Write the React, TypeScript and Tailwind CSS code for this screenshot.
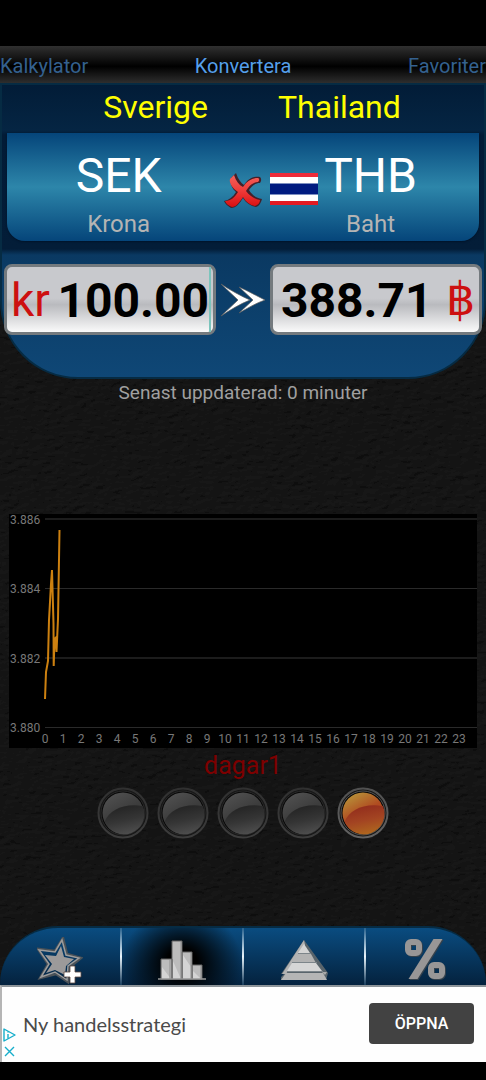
import React, { useState } from "react";

const hours = Array.from({ length: 24 }, (_, i) => i);
const rates = [
  { label: "3.886", y: 5 },
  { label: "3.884", y: 74 },
  { label: "3.882", y: 144 },
  { label: "3.880", y: 213 },
];

function Leather() {
  return (
    <svg className="absolute inset-0 h-full w-full" aria-hidden="true">
      <filter id="leather" x="0" y="0" width="100%" height="100%">
        <feTurbulence type="fractalNoise" baseFrequency="0.1 0.2" numOctaves="2" seed="4" result="noise" />
        <feDiffuseLighting in="noise" lightingColor="#1c1c1c" surfaceScale="2" diffuseConstant="1">
          <feDistantLight azimuth="235" elevation="50" />
        </feDiffuseLighting>
      </filter>
      <rect width="100%" height="100%" fill="#111" />
      <rect width="100%" height="100%" filter="url(#leather)" opacity="0.6" />
    </svg>
  );
}

function CrossIcon() {
  return (
    <svg className="shrink-0" width="38" height="36" viewBox="0 0 38 36" aria-hidden="true">
      <defs>
        <linearGradient id="cross" x1="0" y1="0" x2="0" y2="1">
          <stop offset="0" stopColor="#f4625c" />
          <stop offset="0.5" stopColor="#ee3a38" />
          <stop offset="1" stopColor="#d80f12" />
        </linearGradient>
      </defs>
      <path
        d="M12 0C14 6 17 10 20 12C24 6 29 3 36 4C38 6 37 9 36 10C31 10 28 13 25 17C28 22 32 25 38 26C37 30 35 33 32 34C27 33 22 30 19 25C16 30 12 35 7 35C4 33 1 31 0 28C5 27 9 24 12 19C7 15 6 10 7 5Z"
        fill="#43202a"
      />
      <path
        d="M10 2C12 8 15 12 19 14C23 8 28 5 34 5C36 6 35 8 34 9C29 9 25 13 22 18C26 23 30 26 36 27C36 30 34 32 31 33C26 32 22 29 19 24C15 30 12 34 8 34C5 33 2 31 1 28C7 28 11 24 14 19C8 15 5 10 6 6Z"
        fill="url(#cross)"
      />
    </svg>
  );
}

function ThaiFlag() {
  return (
    <svg className="shrink-0" width="48" height="32" viewBox="0 0 48 32" role="img" aria-label="Thailand">
      <rect width="48" height="32" fill="#fff" />
      <rect width="48" height="4" fill="#ed2b3a" />
      <rect y="28" width="48" height="4" fill="#e31b23" />
      <rect y="10" width="48" height="12" fill="#001b80" />
      <path d="M0 10.5H48M0 21.500H48" stroke="#7d8fc0" />
    </svg>
  );
}

function Arrows() {
  return (
    <svg width="46" height="34" viewBox="0 0 46 34" aria-hidden="true">
      <g stroke="#5a5a5a" strokeWidth="0.700" strokeLinejoin="round" fill="#fff">
        <path d="M19 4C28 8 37 13 45 17C36 20 28 25 19 30L33 17Z" />
        <path d="M1 1C10 7 21 13 30 17C20 21 10 27 1 33L18 17Z" />
      </g>
    </svg>
  );
}

function Chart() {
  return (
    <svg className="w-full bg-black" viewBox="0 0 468 234" role="img" aria-label="SEK / THB">
      <path d="M36 5H468" stroke="#1c1c1c" strokeWidth="2" />
      <path d="M36 74.500H468" stroke="#2a2a2a" />
      <path d="M36 144H468" stroke="#1c1c1c" strokeWidth="2" />
      <path d="M36 213.500H468" stroke="#2a2a2a" />
      <g fill="#787878" fontSize="12" fontFamily="Roboto, sans-serif">
        {rates.map((r) => (
          <text key={r.label} x="1" y={r.y + 5}>{r.label}</text>
        ))}
        {hours.map((h) => (
          <text key={h} x={36 + h * 18} y="229" textAnchor="middle">{h}</text>
        ))}
      </g>
      <path
        d="M36 185L37 158L39 147L40 106L42 70L43 56L44.500 110L44.700 152L45.500 125L46.500 124L47.500 138L49 105L50.500 16"
        fill="none"
        stroke="#cc8010"
        strokeWidth="2"
      />
    </svg>
  );
}

function Dot({ on, index }: { on: boolean; index: number }) {
  const id = "dot" + index;
  return (
    <svg width="52" height="52" viewBox="0 0 52 52" aria-hidden="true">
      <defs>
        <linearGradient id={id + "a"} x1="0.2" y1="0" x2="0.75" y2="1">
          <stop offset="0" stopColor={on ? "#b8963a" : "#515151"} />
          <stop offset="0.5" stopColor={on ? "#b04a20" : "#3c3c3c"} />
          <stop offset="1" stopColor={on ? "#b87420" : "#505050"} />
        </linearGradient>
        <linearGradient id={id + "b"} x1="0.4" y1="0" x2="0.7" y2="1">
          <stop offset="0" stopColor={on ? "#922c1c" : "#232323"} />
          <stop offset="0.5" stopColor={on ? "#a34422" : "#353535"} />
          <stop offset="1" stopColor={on ? "#b06a1e" : "#505050"} />
        </linearGradient>
        <linearGradient id={id + "r"} x1="0" y1="0" x2="0" y2="1">
          <stop offset="0" stopColor={on ? "#505050" : "#303030"} />
          <stop offset="1" stopColor={on ? "#626262" : "#3c3c3c"} />
        </linearGradient>
      </defs>
      <circle cx="26" cy="26" r="24.500" fill="#161616" stroke={`url(#${id}r)`} strokeWidth="2" />
      <circle cx="26" cy="26" r="22" fill="#080808" stroke={on ? "#555" : "#292929"} strokeWidth="1" />
      <circle cx="26" cy="26" r="20.500" fill={`url(#${id}a)`} />
      <path d="M7.500 34.500C13 23 26 16 46 19A20.500 20.500 0 0 1 7.500 34.500Z" fill={`url(#${id}b)`} />
    </svg>
  );
}

function StarIcon() {
  return (
    <svg width="46" height="48" viewBox="0 0 46 48" aria-hidden="true">
      <path d="M26 1L30 17L44 21L33 30L31 45L19 37L3 41L11 27L1 12L18 14Z" fill="none" stroke="#4b5258" strokeWidth="2.500" />
      <path d="M25 3L29 18L42 21L31 29L30 43L18 35L4 40L12 27L2 13L18 15Z" fill="none" stroke="#9b9b9b" strokeWidth="1.500" />
      <path d="M24 9L27 20L37 22L29 29L28 38L18 33L9 36L15 27L8 18L19 19Z" fill="#9c9a9a" />
      <path d="M33 29H38V35H44V40H38V46H33V40H27V35H33Z" fill="#fff" stroke="#5d4a42" strokeWidth="0.800" />
    </svg>
  );
}

function BarsIcon() {
  return (
    <svg width="48" height="48" viewBox="0 0 48 48" aria-hidden="true">
      <path d="M3 22H14V42H3ZM14 4H24V42H14ZM24 15H34V42H24ZM34 28H44V42H34Z" fill="#bcbcbc" stroke="#626262" />
      <path d="M4 30L13 42H4ZM15 24L23 42H15ZM25 18L33 30V42H25ZM35 34L43 42H35Z" fill="#d4d4d4" />
      <path d="M12 22V42M23 5V42M33 16V42M43 29V42" stroke="#8f8f8f" />
      <path d="M0 42H48" stroke="#989898" strokeWidth="1.500" />
    </svg>
  );
}

function PyramidIcon() {
  return (
    <svg width="48" height="48" viewBox="0 0 48 48" aria-hidden="true">
      <path d="M24 3L48 36L46 43H1V40L4 37H1Z" fill="#59646b" />
      <path d="M24 3L2 37H6L25 8Z" fill="#b2b2b2" />
      <path d="M24 7L30 16H18Z" fill="#d5d5d5" />
      <path d="M18 17H31L36 26H12Z" fill="#b3b3b3" />
      <path d="M12 26H36L42 34H7Z" fill="#d6d6d6" />
      <path d="M6 36H43L47 43H1Z" fill="#b5b5b5" />
      <path d="M18 16.500H31M12 25.500H37M7 34.500H43" stroke="#7d858a" />
      <path d="M42 35H47L45 38Z" fill="#aaa" />
    </svg>
  );
}

function PercentIcon() {
  const shape = (
    <>
      <rect x="4" y="5" width="11" height="11" rx="3" strokeWidth="6" />
      <rect x="27" y="28" width="11" height="11" rx="3" strokeWidth="6" />
      <path d="M29.500 2H38.500L13.500 42H4.500Z" strokeWidth="0" className="fill-current" />
    </>
  );
  return (
    <svg width="46" height="48" viewBox="-1 0 46 48" fill="none" aria-hidden="true">
      <g stroke="currentColor" className="text-[#36424c]" transform="translate(1 1)">{shape}</g>
      <g stroke="currentColor" className="text-[#989696]">{shape}</g>
    </svg>
  );
}

const tools = [
  { label: "Favorit", icon: <StarIcon /> },
  { label: "Diagram", icon: <BarsIcon /> },
  { label: "Pyramid", icon: <PyramidIcon /> },
  { label: "Procent", icon: <PercentIcon /> },
];

export default function App() {
  const [amount, setAmount] = useState("100.00");
  return (
    <div className="flex min-h-screen flex-col bg-black pt-[46px] pb-[18px] font-[Roboto,sans-serif]">
      <nav className="flex h-[37px] items-center justify-between bg-[linear-gradient(#303030,#000_55%,#2e2e2e)] pt-0.5 text-xl text-[#34618f]">
        <button className="flex-1 text-left">Kalkylator</button>
        <button className="text-[#559fea]">Konvertera</button>
        <button className="flex-1 text-right">Favoriter</button>
      </nav>

      <main className="relative isolate flex flex-1 flex-col">
        <div className="absolute inset-0 -z-10">
          <Leather />
        </div>

        <section className="rounded-b-[78px] border-2 border-[#062b43] bg-[linear-gradient(#021c37_0,#052543_45px,#021b36_50px,#031d38_164px,#0a3962_170px,#0f4776_100%)]">
          <div className="grid h-12 grid-cols-2 items-center gap-[70px] pb-1 text-[32px] leading-none text-[#ffff00]">
            <h2 className="text-right">Sverige</h2>
            <h2>Thailand</h2>
          </div>
          <div className="mx-[5px] flex h-[108px] items-center rounded-b-[18px] bg-[linear-gradient(#05457a,#2d86aa_50%,#05457a)] text-white shadow-[0_1px_2px_#01142a]">
            <button className="flex flex-1 flex-col items-center pt-[18px] pl-1.5">
              <span className="text-[48px] leading-[56px]">SEK</span>
              <span className="text-2xl leading-[40px] text-[#b4b4b4]">Krona</span>
            </button>
            <button className="mt-2 mr-2 shrink-0" aria-label="Rensa">
              <CrossIcon />
            </button>
            <span className="mt-1 shrink-0">
              <ThaiFlag />
            </span>
            <button className="flex flex-col items-center pt-[18px] pr-[62px] pl-1.5">
              <span className="text-[48px] leading-[56px]">THB</span>
              <span className="text-2xl leading-[40px] text-[#b4b4b4]">Baht</span>
            </button>
          </div>
          <div className="grid grid-cols-[1fr_auto_1fr] items-center gap-1 px-0.5 pt-[23px] pb-[42px] text-[48px] leading-[65px]">
            <label className="flex h-[71px] min-w-0 items-center rounded-lg border-[3px] border-[#747a7e] bg-[linear-gradient(#c8c9cd_48%,#b9babe_58%,#fafafa)] pr-0.5 pl-1">
              <span className="pt-0.5 text-[46px] text-[#cd1010]">kr</span>
              <input
                className="h-full w-full min-w-0 border-r-2 border-[#7cc4bc] bg-transparent pt-0.5 text-right font-bold text-black outline-none"
                value={amount}
                onChange={(e) => setAmount(e.target.value)}
              />
            </label>
            <Arrows />
            <label className="flex h-[71px] min-w-0 items-center rounded-lg border-[3px] border-[#747a7e] bg-[linear-gradient(#c8c9cd_48%,#b9babe_58%,#fafafa)] pr-1 pl-2">
              <input className="h-full w-full min-w-0 bg-transparent pt-0.5 font-bold text-black outline-none" value="388.71" readOnly />
              <span className="text-[46px] text-[#cd1010]">฿</span>
            </label>
          </div>
        </section>

        <p className="text-center text-[19px] leading-7 text-[#a0a0a0]">Senast uppdaterad: 0 minuter</p>

        <div className="mt-[107px] px-[9px]">
          <Chart />
        </div>
        <p className="text-center text-[25px] leading-9 text-[#7d0000]">dagar1</p>
        <div className="mt-[3px] flex justify-center gap-2">
          {[0, 1, 2, 3, 4].map((i) => (
            <button key={i} aria-label={`Period ${i + 1}`}>
              <Dot on={i === 4} index={i} />
            </button>
          ))}
        </div>

        <nav className="mt-auto flex h-[59px] overflow-hidden rounded-t-[58px] border-t-2 border-[#062b43] bg-[linear-gradient(#0a4c80,#04223e)]">
          {tools.map((t, i) => (
            <React.Fragment key={t.label}>
              {i > 0 && <span className="w-0.5 bg-[linear-gradient(#29628e,#e8f4fb_50%,#173c5c)]" />}
              <button
                aria-label={t.label}
                className={
                  i === 1
                    ? "flex flex-1 items-center justify-center bg-[radial-gradient(ellipse_50%_95%_at_50%_60%,#000_25%,transparent)] pt-2"
                    : "flex flex-1 items-center justify-center pt-2"
                }
              >
                {t.icon}
              </button>
            </React.Fragment>
          ))}
        </nav>
      </main>

      <aside className="relative flex h-[77px] items-center justify-between border-t-2 border-l-2 border-t-[#8d9499] border-l-[#b5b5b5] bg-[#fefefe] pr-3 pb-0.5 pl-[21px]">
        <p className="font-[Lato,sans-serif] text-xl text-[#4a4a4a]">Ny handelsstrategi</p>
        <button className="h-[41px] w-[105px] rounded bg-[#424242] text-base font-medium text-white">ÖPPNA</button>
        <svg className="absolute bottom-1 left-0" width="16" height="30" viewBox="0 0 16 30" fill="none" stroke="#16aecb" strokeWidth="1.400" aria-hidden="true">
          <path d="M2 1V13L13 7Z" strokeLinejoin="round" />
          <path d="M6 6V10.500M6 3.500V4.500" />
          <path d="M3 19L12 28M12 19L3 28" />
        </svg>
      </aside>
    </div>
  );
}
